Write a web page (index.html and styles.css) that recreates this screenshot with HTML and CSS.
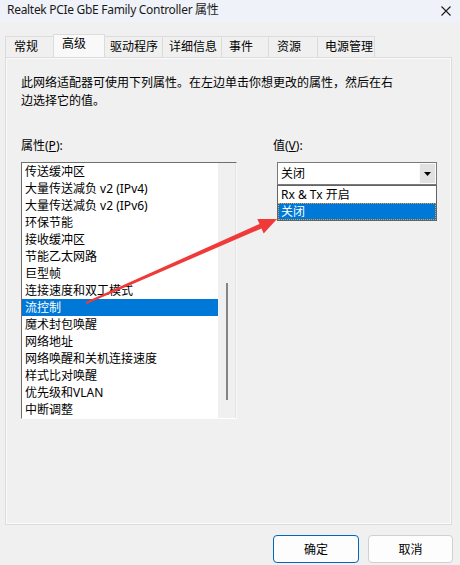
FILE: index.html
```html
<!DOCTYPE html>
<html lang="zh-CN">
<head>
    <meta charset="UTF-8">
    <title>Realtek PCIe GbE Family Controller 属性</title>
    <link rel="stylesheet" href="styles.css">
</head>
<body>
    <div class="window">
        <!-- Title bar -->
        <div class="titlebar">
            <span class="title">Realtek PCIe GbE Family Controller 属性</span>
            <svg class="close" width="10" height="10" viewBox="0 0 10 10">
                <path d="M0.5 0.5 L9.5 9.5 M9.5 0.5 L0.5 9.5" stroke="#1a1a1a" stroke-width="1.1" fill="none"/>
            </svg>
        </div>

        <!-- Tabs -->
        <div class="tabs">
            <div class="tab">常规</div>
            <div class="tab active">高级</div>
            <div class="tab">驱动程序</div>
            <div class="tab">详细信息</div>
            <div class="tab">事件</div>
            <div class="tab">资源</div>
            <div class="tab">电源管理</div>
        </div>

        <!-- Advanced page -->
        <div class="panel">
            <p class="desc">此网络适配器可使用下列属性。在左边单击你想更改的属性，然后在右<br>边选择它的值。</p>
            <div class="fields">
                <div class="prop-col">
                    <label class="field-label">属性(<u>P</u>):</label>
                    <div class="listbox">
                        <ul class="items">
                            <li>传送缓冲区</li>
                            <li>大量传送减负 v2 (IPv4)</li>
                            <li>大量传送减负 v2 (IPv6)</li>
                            <li>环保节能</li>
                            <li>接收缓冲区</li>
                            <li>节能乙太网路</li>
                            <li>巨型帧</li>
                            <li>连接速度和双工模式</li>
                            <li class="selected">流控制</li>
                            <li>魔术封包唤醒</li>
                            <li>网络地址</li>
                            <li>网络唤醒和关机连接速度</li>
                            <li>样式比对唤醒</li>
                            <li>优先级和VLAN</li>
                            <li>中断调整</li>
                        </ul>
                        <div class="scrollbar"><div class="thumb"></div></div>
                    </div>
                </div>
                <div class="value-col">
                    <label class="field-label">值(<u>V</u>):</label>
                    <div class="combo">
                        <span class="combo-text">关闭</span>
                        <span class="combo-btn">
                            <svg width="7" height="4" viewBox="0 0 7 4"><path d="M0 0 H7 L3.5 4 Z" fill="#000"/></svg>
                        </span>
                    </div>
                    <ul class="dropdown">
                        <li>Rx &amp; Tx 开启</li>
                        <li class="selected">关闭</li>
                    </ul>
                </div>
            </div>
        </div>

        <!-- Dialog buttons -->
        <div class="buttons">
            <button class="btn primary">确定</button>
            <button class="btn">取消</button>
        </div>

        <!-- Annotation arrow -->
        <svg class="arrow" width="460" height="565" viewBox="0 0 460 565">
            <polygon fill="#f03a3a" points="86.4,303.9 261.5,228.5 263.7,233.5 277,219 257.3,218.9 259.5,223.9 85.6,302.1"/>
        </svg>
    </div>
</body>
</html>
```

FILE: styles.css
```css
/* Global */
body {
    margin: 0;
    background: #f0f0f0;
    font-family: "Noto Sans", "Noto Sans CJK SC", sans-serif;
    font-size: 12px;
    color: #000;
}

.window {
    position: relative;
    width: 460px;
    height: 565px;
    overflow: hidden;
}

/* Title bar */
.titlebar {
    height: 22px;
    background: #eff2f8;
    display: flex;
    justify-content: space-between;
    align-items: flex-start;
    padding: 2px 9px 0 7px;
    box-sizing: border-box;
}

.title {
    line-height: 16px;
    letter-spacing: -0.3px;
    color: #1a1a1a;
}

.close {
    margin-top: 4px;
}

/* Tabs */
.tabs {
    display: flex;
    align-items: flex-end;
    height: 23px;
    margin: 12px 0 0 5px;
}

.tab {
    height: 21px;
    line-height: 20px;
    padding-left: 7px;
    box-sizing: border-box;
    border: 1px solid #dcdcdc;
    border-bottom: none;
    margin-right: -1px;
    background: #f0f0f0;
}

.tab:nth-child(1) { width: 49px; padding-left: 8px; }
.tab:nth-child(2) { width: 52px; }
.tab:nth-child(3) { width: 59px; padding-left: 5px; }
.tab:nth-child(4) { width: 60px; padding-left: 6px; }
.tab:nth-child(5) { width: 48px; }
.tab:nth-child(6) { width: 50px; padding-left: 8px; }
.tab:nth-child(7) { width: 58px; }

.tab.active {
    height: 23px;
    line-height: 17px;
    padding-left: 8px;
    background: #f9f9f9;
    position: relative;
    z-index: 1;
}

/* Panel */
.panel {
    width: 447px;
    height: 468px;
    margin-left: 5px;
    box-sizing: border-box;
    border: 1px solid #dcdcdc;
    box-shadow: inset 0 0 0 1px #fbfbfb;
    padding: 16px 0 0 15px;
}

.desc {
    margin: 0;
    line-height: 18px;
}

.fields {
    display: flex;
    margin-top: 28px;
}

.field-label {
    display: block;
    line-height: 16px;
    height: 16px;
    margin-bottom: 8px;
}

/* Property list */
.prop-col {
    width: 216px;
}

.listbox {
    display: flex;
    width: 216px;
    height: 257px;
    box-sizing: border-box;
    border: 1px solid;
    border-color: #6f6f6f #f8f8f8 #ffffff #6f6f6f;
    box-shadow: 1px 1px 0 #e3e3e3 inset;
    background: #fff;
}

.items {
    list-style: none;
    margin: 0;
    padding: 0;
    width: 197px;
    background: #fff;
}

.items li {
    height: 17px;
    line-height: 17px;
    padding-left: 3px;
    white-space: nowrap;
}

.items li.selected {
    background: #0078d7;
    color: #fff;
}

.scrollbar {
    width: 17px;
    background: #f0f0f0;
    border-right: 1px solid #e3e3e3;
    padding-top: 120px;
}

.thumb {
    width: 2px;
    height: 117px;
    margin-left: 8px;
    background: #858585;
}

/* Value combo */
.value-col {
    margin-left: 36px;
    width: 164px;
}

.combo {
    display: flex;
    justify-content: space-between;
    margin-left: 4px;
    width: 160px;
    height: 23px;
    box-sizing: border-box;
    border: 1px solid #7a7a7a;
    background: #fff;
}

.combo-text {
    line-height: 21px;
    padding-left: 3px;
}

.combo-btn {
    width: 17px;
    height: 21px;
    box-sizing: border-box;
    background: #e1e1e1;
    border: 1px solid #fbfbfb;
    display: flex;
    align-items: center;
    justify-content: center;
}

.dropdown {
    list-style: none;
    margin: 0 0 0 4px;
    padding: 0;
    width: 160px;
    box-sizing: border-box;
    border: 1px solid #646464;
    background: #fff;
}

.dropdown li {
    height: 17px;
    line-height: 17px;
    padding-left: 3px;
}

.dropdown li.selected {
    background: #0078d7;
    color: #fff;
    outline: 1px dotted #f0a030;
    outline-offset: -1px;
}

/* Buttons */
.buttons {
    display: flex;
    justify-content: flex-end;
    gap: 9px;
    margin-top: 10px;
    padding-right: 7px;
}

.btn {
    width: 86px;
    height: 28px;
    font-family: "Noto Sans", "Noto Sans CJK SC", sans-serif;
    font-size: 12px;
    color: #000;
    background: #fdfdfd;
    border: 1px solid #d0d0d0;
    border-radius: 4px;
    padding: 0;
}

.btn.primary {
    border-color: #0067c0;
}

.btn + .btn {
    width: 85px;
}

/* Arrow overlay */
.arrow {
    position: absolute;
    left: 0;
    top: 0;
    pointer-events: none;
}
```
